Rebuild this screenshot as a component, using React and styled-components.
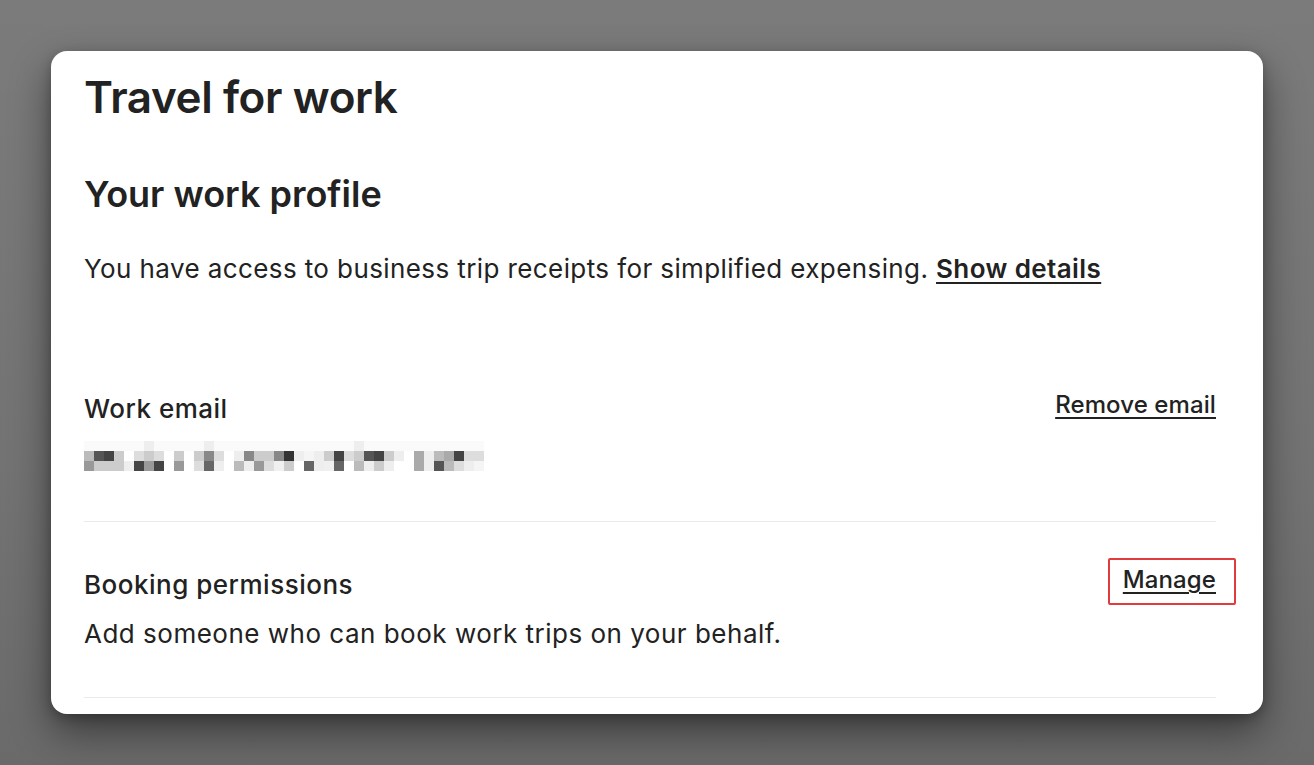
import styled, { createGlobalStyle } from 'styled-components'

const GlobalStyle = createGlobalStyle`
  html, body {
    margin: 0;
    padding: 0;
  }
  body {
    background: linear-gradient(180deg, #7b7b7b 0%, #737373 60%, #6a6a6a 100%);
    font-family: Inter, "Noto Sans", sans-serif;
    color: #222222;
    -webkit-font-smoothing: antialiased;
  }
`

const Backdrop = styled.div`
  width: 1314px;
  height: 765px;
  padding: 51px;
  box-sizing: border-box;
`

const Card = styled.div`
  width: 1212px;
  height: 663px;
  box-sizing: border-box;
  background: #ffffff;
  border-radius: 16px;
  overflow: hidden;
  padding: 18px 47px 0 33px;
  box-shadow: 0 18px 40px rgba(0, 0, 0, 0.45), 0 4px 12px rgba(0, 0, 0, 0.25);
`

const Title = styled.h1`
  margin: 0;
  font-size: 44px;
  line-height: 56px;
  font-weight: 600;
  letter-spacing: -0.4px;
`

const Subtitle = styled.h2`
  margin: 47px 0 0;
  font-size: 36px;
  line-height: 44px;
  font-weight: 600;
  letter-spacing: 0;
`

const Intro = styled.p`
  margin: 37px 0 0;
  font-size: 26px;
  line-height: 32px;
  font-weight: 400;
  letter-spacing: 0.4px;
`

const TextLink = styled.a`
  color: #222222;
  font-weight: 600;
  text-decoration: underline;
  text-underline-offset: 4px;
  text-decoration-thickness: 2px;
  cursor: pointer;
`

const Section = styled.div`
  display: flex;
  justify-content: space-between;
  align-items: flex-start;
  margin-top: ${p => p.$first ? '61px' : '0'};
  padding: 47px 0;
  border-bottom: 1px solid #ebebeb;
`

const SectionBody = styled.div`
  display: flex;
  flex-direction: column;
  gap: 16px;
`

const Label = styled.div`
  font-size: 26px;
  line-height: 32px;
  font-weight: 500;
  letter-spacing: 0.5px;
`

const Description = styled.div`
  font-size: 26px;
  line-height: 32px;
  letter-spacing: 0.5px;
  margin-top: 1px;
`

const Action = styled(TextLink)`
  font-size: 24px;
  line-height: 32px;
  font-weight: 500;
  letter-spacing: 0.1px;
  padding: ${p => p.$highlight ? '4px 18px 7px 13px' : '0'};
  margin: ${p => p.$highlight ? '-11px -20px 0 0' : '-4px 0 0 0'};
  border: ${p => p.$highlight ? '2px solid #e23b3b' : 'none'};
  border-radius: 2px;
`

const Blurred = styled.svg`
  display: block;
  margin-bottom: 3px;
`

// pixelated email, 40 columns x 3 rows of 10px blocks
const topRow = Array.from({ length: 40 }, (_, i) => ([6, 12, 27].includes(i) ? 'eeeeee' : 'fafafa'))

const pixels = [
  topRow,
  ['bbb', '555', '444', 'ccc', 'fff', 'ddd', 'ccc', 'ddd', 'fff', 'ccc', 'fff', 'ccc', '888', 'ddd', 'fff', 'eee', '888', 'ccc', 'ccc', '888',
    '333', 'eee', 'f5f5f5', 'eee', 'ccc', '444', 'ddd', 'ccc', '555', '444', 'ccc', 'eee', 'fff', 'aaa', 'eee', 'bbb', 'aaa', '444', 'ddd', 'ddd'],
  ['999', 'ccc', 'ccc', 'ccc', 'eee', '444', '999', '444', 'fff', '999', 'fff', 'ddd', '666', 'eee', 'fff', 'bbb', 'eee', '999', 'ddd', 'f0f0f0',
    'ccc', 'fff', '666', 'eee', 'f0f0f0', '666', 'fff', 'bbb', 'eee', 'ccc', 'eee', 'fff', 'fff', 'aaa', 'eee', '555', 'bbb', 'ddd', 'eee', 'f5f5f5']
]

const EmailPixels = () => (
  <Blurred width="400" height="30" viewBox="0 0 400 30">
    {pixels.map((row, r) =>
      row.map((c, i) => (
        <rect key={r + '-' + i} x={i * 10} y={r * 10} width="10" height="10" fill={'#' + c} />
      ))
    )}
  </Blurred>
)

export default function App() {
  return (
    <Backdrop>
      <GlobalStyle />
      <Card>
        <Title>Travel for work</Title>
        <Subtitle>Your work profile</Subtitle>
        <Intro>
          You have access to business trip receipts for simplified expensing.{' '}
          <TextLink>Show details</TextLink>
        </Intro>

        <Section $first>
          <SectionBody>
            <Label>Work email</Label>
            <EmailPixels />
          </SectionBody>
          <Action>Remove email</Action>
        </Section>

        <Section>
          <SectionBody>
            <Label>Booking permissions</Label>
            <Description>Add someone who can book work trips on your behalf.</Description>
          </SectionBody>
          <Action $highlight>Manage</Action>
        </Section>
      </Card>
    </Backdrop>
  )
}
